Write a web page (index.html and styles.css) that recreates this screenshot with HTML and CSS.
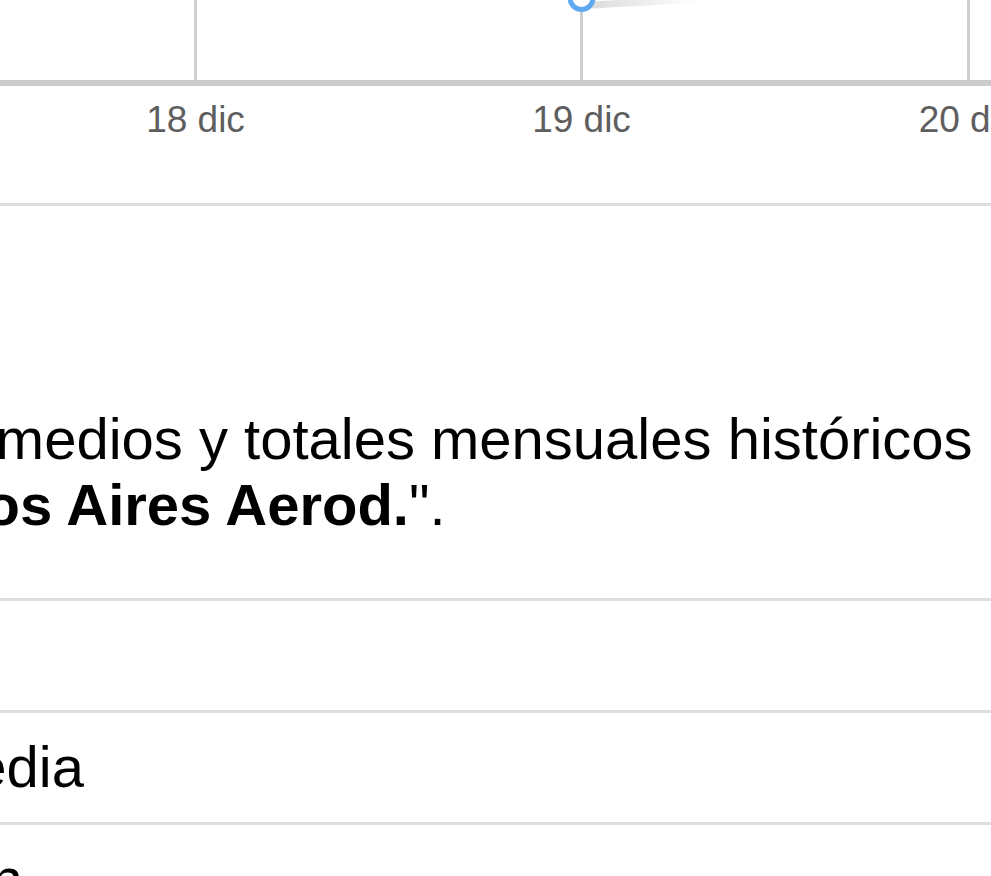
FILE: index.html
```html
<!DOCTYPE html>
<html lang="es">
<head>
<meta charset="utf-8">
<title>Valores mensuales históricos</title>
<link rel="stylesheet" href="styles.css">
</head>
<body>
<div class="page">
  <div class="chart">
    <svg class="chart-svg" width="991" height="203" viewBox="0 0 991 203" xmlns="http://www.w3.org/2000/svg">
      <defs>
        <linearGradient id="shadow" gradientUnits="userSpaceOnUse" x1="588" y1="0" x2="700" y2="0">
          <stop offset="0" stop-color="#000" stop-opacity="0.14"/>
          <stop offset="1" stop-color="#000" stop-opacity="0"/>
        </linearGradient>
      </defs>
      <rect x="194" y="0" width="3" height="80" fill="#cfcfcf"/>
      <rect x="580" y="0" width="3" height="80" fill="#cfcfcf"/>
      <rect x="967" y="0" width="3" height="80" fill="#cfcfcf"/>
      <rect x="0" y="80" width="991" height="6" fill="#cccccc"/>
      <path d="M592 5 L700 -1" stroke="url(#shadow)" stroke-width="7" fill="none"/>
      <circle cx="581.5" cy="-2" r="11.5" fill="#ffffff" stroke="#5fa9f0" stroke-width="5"/>
      <g class="labels">
        <text x="195.5" y="132" text-anchor="middle">18 dic</text>
        <text x="581.5" y="132" text-anchor="middle">19 dic</text>
        <text x="968" y="132" text-anchor="middle">20 dic</text>
      </g>
    </svg>
  </div>
  <p class="desc">promedios y totales mensuales históricos de la estación<br>"<b>Buenos Aires Aerod.</b>".</p>
  <table class="stats">
    <tr><td>&nbsp;</td></tr>
    <tr><td>Media</td></tr>
    <tr><td>Mín.</td></tr>
  </table>
</div>
</body>
</html>
```

FILE: styles.css
```css
html, body {
  margin: 0;
  padding: 0;
  background: #ffffff;
}

body {
  overflow: hidden;
  font-family: "Liberation Sans", Arial, sans-serif;
  color: #000000;
}

.page {
  width: 991px;
  height: 876px;
  overflow: hidden;
}

.chart {
  height: 203px;
  border-bottom: 3px solid #dddddd;
}

.chart-svg {
  display: block;
  overflow: visible;
}

.labels text {
  font-family: "Liberation Sans", Arial, sans-serif;
  font-size: 37px;
  fill: #5e5e5e;
}

.desc {
  margin: 200px 0 0 -181px;
  font-size: 58px;
  line-height: 66px;
  text-indent: 93px;
  white-space: nowrap;
}

.desc b {
  font-weight: bold;
}

.stats {
  margin: 60px 0 0 -74px;
  border-collapse: separate;
  border-spacing: 0;
  width: 1200px;
  font-size: 58px;
  line-height: 66px;
}

.stats td {
  border-top: 3px solid #dce1df;
  padding: 21px 0 22px 0;
  white-space: nowrap;
}
```
